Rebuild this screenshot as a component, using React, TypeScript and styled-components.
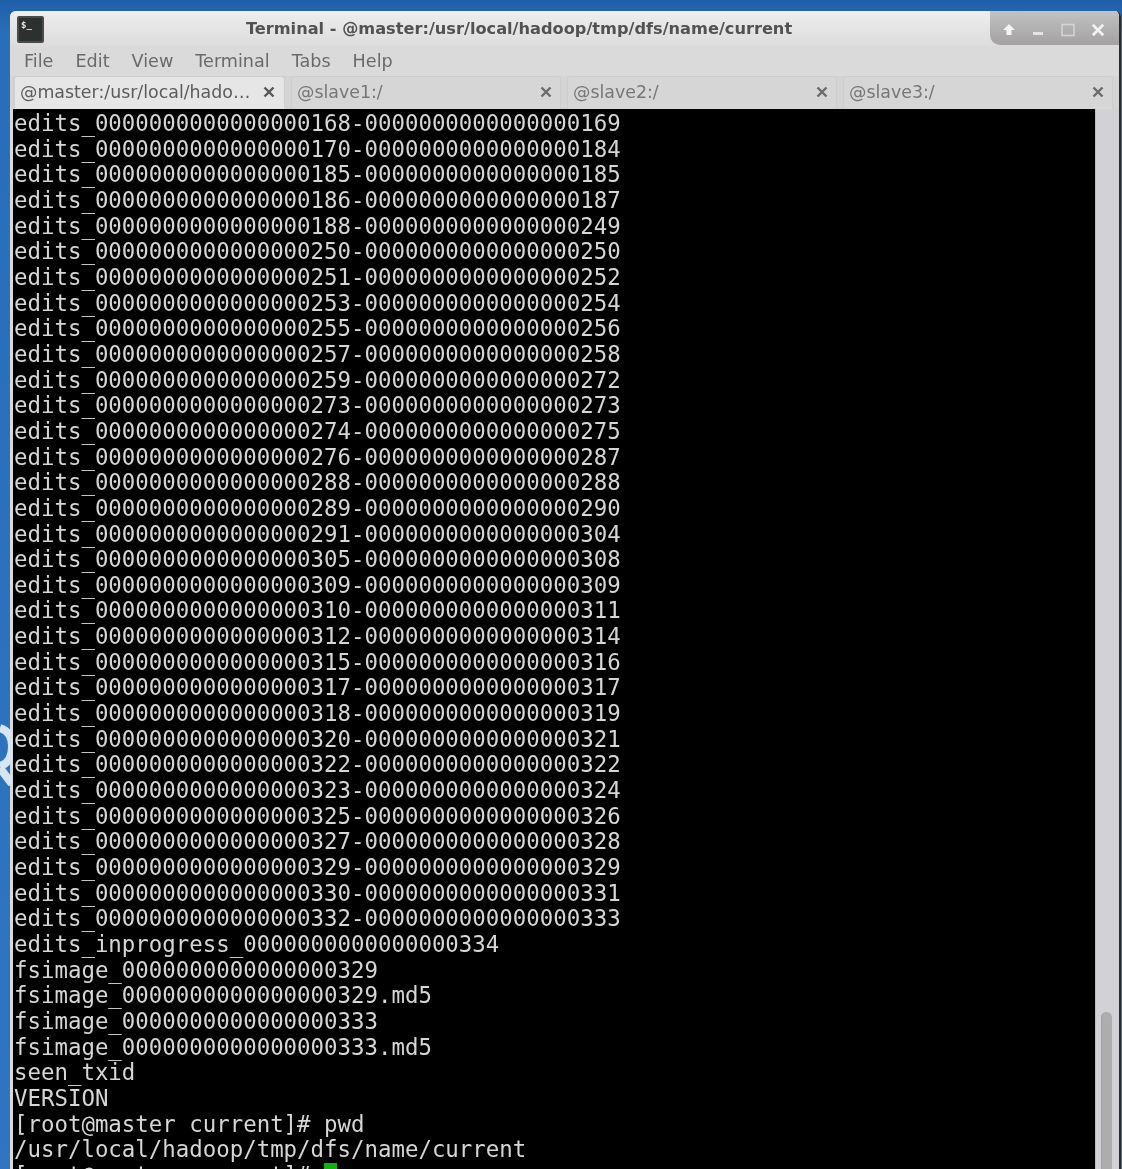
import React from "react";
import styled, { createGlobalStyle } from "styled-components";

const Global = createGlobalStyle`
  html, body { margin: 0; padding: 0; height: 1169px; overflow: hidden; background: #2268b4; }
  #root { height: 1169px; }
`;

const Desktop = styled.div`
  position: relative;
  height: 1169px;
  overflow: hidden;
  box-sizing: border-box;
  padding: 11px 1px 0 10px;
  background: linear-gradient(180deg, #1f5fa9 0, #2a6db8 30px, #2f75c0 100%);
  filter: blur(0.45px);
`;

const WallpaperMark = styled.svg`
  position: absolute;
  left: 0;
  top: 722px;
  width: 12px;
  height: 64px;
`;

const Window = styled.div`
  height: 1158px;
  display: flex;
  flex-direction: column;
  background: #d9d9d9;
  border-radius: 6px 6px 0 0;
  border-right: 2px solid #2b2b2b;
  overflow: hidden;
`;

const TitleBar = styled.div`
  height: 35px;
  flex: none;
  display: flex;
  align-items: flex-start;
  background: linear-gradient(180deg, #eeeeee 0, #dcdcdc 100%);
`;

const AppIcon = styled.div`
  flex: none;
  width: 27px;
  height: 27px;
  margin: 5px 0 0 7px;
  box-sizing: border-box;
  border: 2px solid #4a4a4a;
  border-radius: 2px;
  background: #2c3130;
  color: #e8e8e8;
  font: 700 9px/10px "DejaVu Sans Mono", monospace;
  padding: 2px 0 0 2px;
`;

const Title = styled.div`
  flex: 1;
  padding-left: 4px;
  text-align: center;
  font: 700 16.2px/36px "DejaVu Sans", sans-serif;
  color: #525252;
  white-space: nowrap;
`;

const Controls = styled.div`
  flex: none;
  width: 129px;
  height: 34px;
  display: flex;
  align-items: center;
  justify-content: space-around;
  box-sizing: border-box;
  padding: 3px 6px 0 4px;
  border-radius: 0 0 0 10px;
  background: linear-gradient(180deg, #c2c2c2 0, #a3a1a1 100%);
`;

const MenuBar = styled.div`
  height: 30px;
  flex: none;
  display: flex;
  align-items: center;
  gap: 22px;
  padding-left: 14px;
  background: #dadada;
`;

const MenuItem = styled.span`
  font: 400 17.6px/30px "DejaVu Sans", sans-serif;
  color: #6a6a6a;
`;

const TabBar = styled.div`
  height: 33px;
  flex: none;
  display: flex;
  gap: 6px;
  padding: 0 6px 0 4px;
  background: #d4d4d4;
`;

const Tab = styled.div<{ $active?: boolean }>`
  flex: 1;
  min-width: 0;
  display: flex;
  align-items: center;
  justify-content: space-between;
  box-sizing: border-box;
  height: 33px;
  padding: 0 ${(p) => (p.$active ? 9 : 8)}px 3px 5px;
  border: 1px solid #cdcdcd;
  border-bottom: none;
  border-radius: 3px 3px 0 0;
  background: ${(p) => (p.$active ? "#e6e6e6" : "#d6d6d6")};
  color: ${(p) => (p.$active ? "#5c5c5c" : "#777777")};
  font: 400 17.4px/30px "DejaVu Sans", sans-serif;
  white-space: nowrap;
`;

const Body = styled.div`
  flex: 1;
  min-height: 0;
  display: flex;
  padding-left: 3px;
`;

const Screen = styled.pre`
  flex: 1;
  margin: 0;
  min-width: 0;
  overflow: hidden;
  padding: 2px 0 0 1px;
  background: #000000;
  color: #d6d6d6;
  font: 400 22.4px/25.65px "DejaVu Sans Mono", monospace;
`;

const Cursor = styled.span`
  display: inline-block;
  width: 13px;
  height: 25px;
  vertical-align: top;
  background: #12b012;
`;

const ScrollTrack = styled.div`
  flex: none;
  width: 24px;
  box-sizing: border-box;
  padding: 903px 7px 0 5px;
  background: #d2d2d6;
  border-left: 1px solid #bcbcc0;
`;

const ScrollThumb = styled.div`
  height: 200px;
  border-radius: 6px 6px 0 0;
  background: #adadad;
  border-left: 1px solid #a0a0a6;
`;

const pad = (n: number) => String(n).padStart(19, "0");

const ranges: [number, number][] = [
  [168, 169], [170, 184], [185, 185], [186, 187], [188, 249], [250, 250], [251, 252], [253, 254],
  [255, 256], [257, 258], [259, 272], [273, 273], [274, 275], [276, 287], [288, 288], [289, 290],
  [291, 304], [305, 308], [309, 309], [310, 311], [312, 314], [315, 316], [317, 317], [318, 319],
  [320, 321], [322, 322], [323, 324], [325, 326], [327, 328], [329, 329], [330, 331], [332, 333],
];

const lines = [
  ...ranges.map(([a, b]) => `edits_${pad(a)}-${pad(b)}`),
  `edits_inprogress_${pad(334)}`,
  `fsimage_${pad(329)}`,
  `fsimage_${pad(329)}.md5`,
  `fsimage_${pad(333)}`,
  `fsimage_${pad(333)}.md5`,
  "seen_txid",
  "VERSION",
  "[root@master current]# pwd",
  "/usr/local/hadoop/tmp/dfs/name/current",
];

const CloseGlyph = ({ color, size = 12 }: { color: string; size?: number }) => (
  <svg width={size} height={size} viewBox="0 0 12 12" style={{ flex: "none" }}>
    <path d="M1.5 1.5 10.5 10.5M10.5 1.5 1.5 10.5" stroke={color} strokeWidth="2.4" />
  </svg>
);

const tabs = ["@master:/usr/local/hado…", "@slave1:/", "@slave2:/", "@slave3:/"];

export default function App() {
  return (
    <>
      <Global />
      <Desktop>
        <WallpaperMark viewBox="0 0 12 64">
          <path d="M0 6C7 8 12 14 12 24 12 34 8 42 0 44" fill="none" stroke="#d5e6f5" strokeWidth="8" />
          <path d="M0 46 12 62" stroke="#d5e6f5" strokeWidth="8" />
        </WallpaperMark>
        <Window>
          <TitleBar>
            <AppIcon>$_</AppIcon>
            <Title>Terminal - @master:/usr/local/hadoop/tmp/dfs/name/current</Title>
            <Controls>
              <svg width="14" height="14" viewBox="0 0 14 14">
                <path d="M7 1 13 7H9.5V12H4.5V7H1Z" fill="#f4f4f4" />
              </svg>
              <svg width="12" height="14" viewBox="0 0 12 14">
                <rect x="1" y="9" width="10" height="3" fill="#e4e4e4" />
              </svg>
              <svg width="14" height="14" viewBox="0 0 14 14">
                <rect x="1" y="1.5" width="12" height="11" fill="none" stroke="#d4d4d4" strokeWidth="1.6" />
              </svg>
              <CloseGlyph color="#f2f2f2" size={14} />
            </Controls>
          </TitleBar>
          <MenuBar>
            {["File", "Edit", "View", "Terminal", "Tabs", "Help"].map((m) => (
              <MenuItem key={m}>{m}</MenuItem>
            ))}
          </MenuBar>
          <TabBar>
            {tabs.map((t, i) => (
              <Tab key={t} $active={i === 0}>
                <span>{t}</span>
                <CloseGlyph color={i === 0 ? "#555555" : "#6a6a6a"} />
              </Tab>
            ))}
          </TabBar>
          <Body>
            <Screen>
              {lines.join("\n")}
              {"\n[root@master current]# "}
              <Cursor />
            </Screen>
            <ScrollTrack>
              <ScrollThumb />
            </ScrollTrack>
          </Body>
        </Window>
      </Desktop>
    </>
  );
}
